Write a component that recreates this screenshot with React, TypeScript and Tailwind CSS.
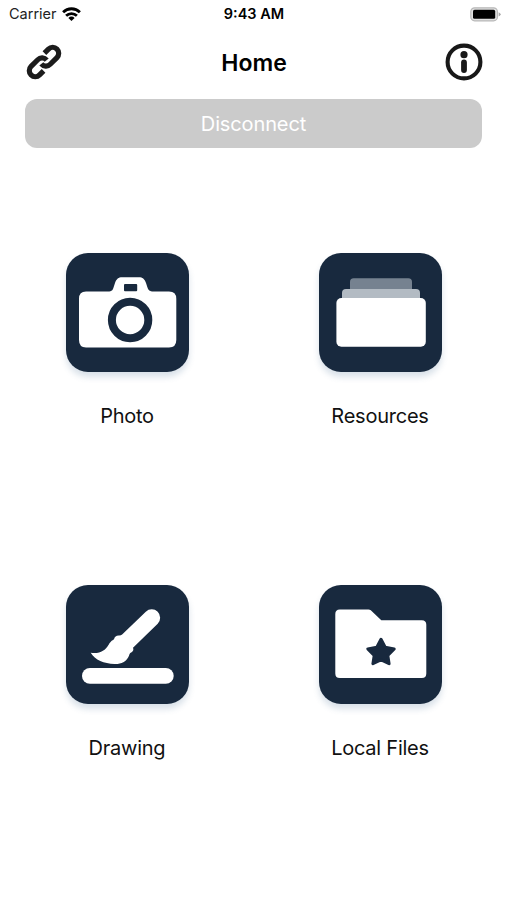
import type { ReactNode } from "react";

const NAVY = "#18293e";

function LinkIcon() {
  const half = "M6.6 -6H12.3A6 6 0 0 1 12.3 6H2.8A6 6 0 0 1 -3.2 -0.6";
  return (
    <svg width="38" height="38" viewBox="-19 -19 38 38" fill="none" stroke="#1c1c1c" strokeWidth="5.2">
      <g transform="rotate(-45)">
        <path d={half} />
        <path d={half} transform="rotate(180)" />
      </g>
    </svg>
  );
}

function InfoIcon() {
  return (
    <svg width="38" height="38" viewBox="0 0 38 38">
      <circle cx="19" cy="19" r="16.4" fill="none" stroke="#181818" strokeWidth="4.1" />
      <circle cx="19" cy="11.7" r="3.6" fill="#181818" />
      <rect x="16.1" y="16.6" width="5.8" height="13.4" rx="2.9" fill="#181818" />
    </svg>
  );
}

function WifiIcon() {
  return (
    <svg width="19" height="15" viewBox="0 0 19 15" fill="none" stroke="#000" strokeWidth="2.8">
      <path d="M1.1 5.2A12 12 0 0 1 17.9 5.2" />
      <path d="M4.1 8.7A7.8 7.8 0 0 1 14.9 8.7" />
      <path d="M9.5 13.9L6.4 10.9A4.4 4.4 0 0 1 12.6 10.9Z" fill="#000" stroke="none" />
    </svg>
  );
}

function BatteryIcon() {
  return (
    <svg width="31" height="15" viewBox="0 0 31 15">
      <rect x="0.8" y="0.8" width="26.6" height="13" rx="3.8" fill="#e0e0e0" stroke="#b8b8b8" strokeWidth="1.2" />
      <rect x="3" y="2.8" width="22.2" height="9" rx="1.6" fill="#000" />
      <path d="M28.6 5.2Q30.6 6 30.6 7.3T28.6 9.4Z" fill="#a8a8a8" />
    </svg>
  );
}

function Camera() {
  return (
    <>
      <path
        fill="#fff"
        d="M20 38.5H42C46 38.5 46.8 37 47.7 34L49 30C50.5 26 52.5 24.3 56 24.3H73C76.5 24.3 78.5 26 80 30L81.3 34C82.2 37 83.5 38.5 87.5 38.5H103Q110.3 38.5 110.3 45.8V87Q110.3 94.4 103 94.4H20Q13 94.4 13 87V45.8Q13 38.5 20 38.5Z"
      />
      <rect x="58" y="31" width="13.2" height="7.2" rx="1" fill={NAVY} />
      <circle cx="64.1" cy="67" r="18.2" fill="none" stroke={NAVY} strokeWidth="8" />
    </>
  );
}

function Stack() {
  return (
    <>
      <path fill="#768290" d="M31 36V29Q31 25.3 34.7 25.3H89.3Q93 25.3 93 29V36Z" />
      <path fill="#b3bbc3" d="M23 45V40Q23 36 27 36H97Q101 36 101 40V45Z" />
      <rect x="17.4" y="45" width="89.4" height="48.8" rx="5" fill="#fff" />
    </>
  );
}

function Brush() {
  return (
    <>
      <path
        fill="#fff"
        d="M79.8 26.8A8.4 8.4 0 0 1 91.7 38.7L67 62.8Q68.2 65.6 65.6 67.2C63.3 68.2 63.6 69.6 62.4 72C60 76.6 55 79.3 48.5 79C38 78.5 29 75.2 24.7 67.8C34 69 38.8 66 42.8 59.5C44.8 56 46.2 55.5 48 54.2Q49 50.4 52.8 50.5Q55 50.6 56.4 49.2Z"
      />
      <rect x="16" y="83" width="91.7" height="15.8" rx="7.9" fill="#fff" />
    </>
  );
}

function StarFolder() {
  return (
    <>
      <path
        fill="#fff"
        d="M20.8 24.4H49.5Q50.7 24.4 51.8 25.3L62.3 35.3H102.8Q107.3 35.3 107.3 39.8V88.5Q107.3 93 102.8 93H20.8Q16.3 93 16.3 88.5V28.9Q16.3 24.4 20.8 24.4Z"
      />
      <path
        fill={NAVY}
        stroke={NAVY}
        strokeWidth="3"
        strokeLinejoin="round"
        d="M62 54.3L66.2 62.3L75.2 63.9L68.8 70.4L70.1 78.7L62 75L53.9 78.7L55.2 70.4L48.8 63.9L57.8 62.3Z"
      />
    </>
  );
}

function Tile({ label, children }: { label: string; children: ReactNode }) {
  return (
    <button className="flex flex-col items-center">
      <span className="h-[118.5px] w-[123px] rounded-[22px] bg-[#18293e] shadow-[0_5px_6px_rgba(65,105,145,0.2)]">
        <svg width="123" height="118.5" viewBox="0 0 123 118.5">
          {children}
        </svg>
      </span>
      <span className="mt-[30px] pr-px text-[20px] leading-7 tracking-[-0.012em] text-[#111]">{label}</span>
    </button>
  );
}

export default function App() {
  return (
    <main className="h-[900px] w-[507px] overflow-hidden bg-white font-['Inter','Liberation_Sans',sans-serif] text-black">
      <div className="grid h-7 grid-cols-3 items-center pr-[6px] pl-[9px]">
        <div className="flex items-center gap-[5px] text-[14.5px] text-[#222]">
          <span>Carrier</span>
          <WifiIcon />
        </div>
        <span className="pr-[2px] text-center text-[14.5px] font-semibold">9:43 AM</span>
        <div className="flex justify-end">
          <BatteryIcon />
        </div>
      </div>
      <header className="flex h-[71px] items-center justify-between pr-6 pb-[3px] pl-[25px]">
        <button aria-label="Connect"><LinkIcon /></button>
        <h1 className="pt-[2px] text-[23px] font-semibold">Home</h1>
        <button aria-label="Information"><InfoIcon /></button>
      </header>
      <button className="mx-[25px] block h-[48.5px] w-[457px] rounded-[12px] bg-[#cbcbcb] pt-[2px] text-[20px] tracking-[-0.006em] text-white">
        Disconnect
      </button>
      <div className="mt-[105.5px] grid grid-cols-2 gap-y-[155.5px] pl-px">
        <Tile label="Photo"><Camera /></Tile>
        <Tile label="Resources"><Stack /></Tile>
        <Tile label="Drawing"><Brush /></Tile>
        <Tile label="Local Files"><StarFolder /></Tile>
      </div>
    </main>
  );
}
